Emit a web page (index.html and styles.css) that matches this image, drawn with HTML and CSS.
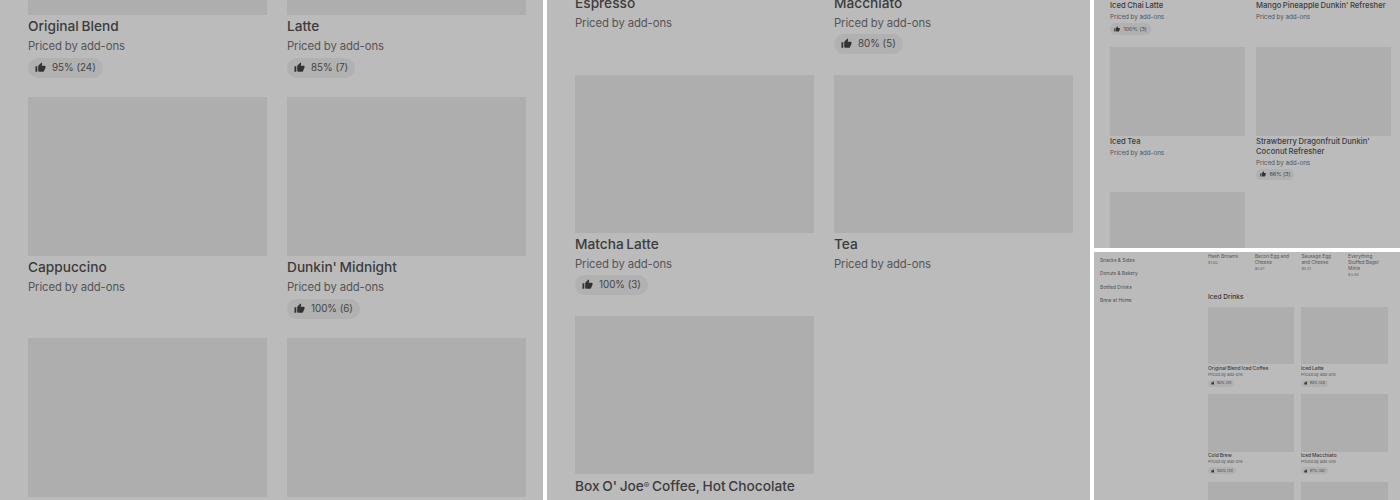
FILE: index.html
```html
<!DOCTYPE html>
<html lang="en">
<head>
    <meta charset="UTF-8">
    <title>Menu screenshots</title>
    <link rel="stylesheet" href="styles.css">
</head>
<body>
    <svg class="icon-defs" width="0" height="0">
        <symbol id="thumb" viewBox="0 0 24 24">
            <path d="M1 21h4V9H1v12zm22-11c0-1.1-.9-2-2-2h-6.31l.95-4.57.03-.32c0-.41-.17-.79-.44-1.06L14.17 1 7.59 7.59C7.22 7.95 7 8.45 7 9v10c0 1.1.9 2 2 2h9c.83 0 1.54-.5 1.84-1.22l3.02-7.05c.09-.23.14-.47.14-.73v-2z"/>
        </symbol>
    </svg>

    <div class="collage">
        <!-- Left panel -->
        <section class="panel panel-left">
            <div class="item-grid">
                <div class="card">
                    <div class="photo"></div>
                    <div class="title">Original Blend</div>
                    <div class="price">Priced by add-ons</div>
                    <div class="pill"><svg><use href="#thumb"/></svg>95% (24)</div>
                </div>
                <div class="card">
                    <div class="photo"></div>
                    <div class="title">Latte</div>
                    <div class="price">Priced by add-ons</div>
                    <div class="pill"><svg><use href="#thumb"/></svg>85% (7)</div>
                </div>
                <div class="card">
                    <div class="photo"></div>
                    <div class="title">Cappuccino</div>
                    <div class="price">Priced by add-ons</div>
                </div>
                <div class="card">
                    <div class="photo"></div>
                    <div class="title">Dunkin' Midnight</div>
                    <div class="price">Priced by add-ons</div>
                    <div class="pill"><svg><use href="#thumb"/></svg>100% (6)</div>
                </div>
                <div class="card"><div class="photo"></div></div>
                <div class="card"><div class="photo"></div></div>
            </div>
        </section>

        <!-- Middle panel -->
        <section class="panel panel-mid">
            <div class="item-grid">
                <div class="card">
                    <div class="photo"></div>
                    <div class="title">Espresso</div>
                    <div class="price">Priced by add-ons</div>
                </div>
                <div class="card">
                    <div class="photo"></div>
                    <div class="title">Macchiato</div>
                    <div class="price">Priced by add-ons</div>
                    <div class="pill"><svg><use href="#thumb"/></svg>80% (5)</div>
                </div>
                <div class="card">
                    <div class="photo"></div>
                    <div class="title">Matcha Latte</div>
                    <div class="price">Priced by add-ons</div>
                    <div class="pill"><svg><use href="#thumb"/></svg>100% (3)</div>
                </div>
                <div class="card">
                    <div class="photo"></div>
                    <div class="title">Tea</div>
                    <div class="price">Priced by add-ons</div>
                </div>
                <div class="card">
                    <div class="photo"></div>
                    <div class="title">Box O' Joe<span class="reg">®</span> Coffee, Hot Chocolate</div>
                    <div class="price">Priced by add-ons</div>
                </div>
            </div>
        </section>

        <!-- Top right panel -->
        <section class="panel panel-top">
            <div class="item-grid">
                <div class="card">
                    <div class="photo"></div>
                    <div class="title">Iced Chai Latte</div>
                    <div class="price">Priced by add-ons</div>
                    <div class="pill"><svg><use href="#thumb"/></svg>100% (3)</div>
                </div>
                <div class="card">
                    <div class="photo"></div>
                    <div class="title">Mango Pineapple Dunkin' Refresher</div>
                    <div class="price">Priced by add-ons</div>
                </div>
                <div class="card">
                    <div class="photo"></div>
                    <div class="title">Iced Tea</div>
                    <div class="price">Priced by add-ons</div>
                </div>
                <div class="card">
                    <div class="photo"></div>
                    <div class="title">Strawberry Dragonfruit Dunkin' Coconut Refresher</div>
                    <div class="price">Priced by add-ons</div>
                    <div class="pill"><svg><use href="#thumb"/></svg>66% (3)</div>
                </div>
                <div class="card"><div class="photo"></div></div>
            </div>
        </section>

        <!-- Bottom right panel -->
        <section class="panel panel-bottom">
            <nav class="side-nav">
                <div>Snacks &amp; Sides</div>
                <div>Donuts &amp; Bakery</div>
                <div>Bottled Drinks</div>
                <div>Brew at Home</div>
            </nav>
            <div class="menu">
                <div class="snack-row">
                    <div class="snack">
                        <div class="snack-name">Hash Browns</div>
                        <div class="snack-price">$1.60</div>
                    </div>
                    <div class="snack">
                        <div class="snack-name">Bacon Egg and Cheese</div>
                        <div class="snack-price">$5.81</div>
                    </div>
                    <div class="snack">
                        <div class="snack-name">Sausage Egg and Cheese</div>
                        <div class="snack-price">$5.41</div>
                    </div>
                    <div class="snack">
                        <div class="snack-name">Everything Stuffed Bagel Minis</div>
                        <div class="snack-price">$3.49</div>
                    </div>
                </div>
                <h2 class="section-title">Iced Drinks</h2>
                <div class="item-grid">
                    <div class="card">
                        <div class="photo"></div>
                        <div class="title">Original Blend Iced Coffee</div>
                        <div class="price">Priced by add-ons</div>
                        <div class="pill"><svg><use href="#thumb"/></svg>90% (31)</div>
                    </div>
                    <div class="card">
                        <div class="photo"></div>
                        <div class="title">Iced Latte</div>
                        <div class="price">Priced by add-ons</div>
                        <div class="pill"><svg><use href="#thumb"/></svg>90% (33)</div>
                    </div>
                    <div class="card">
                        <div class="photo"></div>
                        <div class="title">Cold Brew</div>
                        <div class="price">Priced by add-ons</div>
                        <div class="pill"><svg><use href="#thumb"/></svg>100% (12)</div>
                    </div>
                    <div class="card">
                        <div class="photo"></div>
                        <div class="title">Iced Macchiato</div>
                        <div class="price">Priced by add-ons</div>
                        <div class="pill"><svg><use href="#thumb"/></svg>97% (30)</div>
                    </div>
                    <div class="card"><div class="photo"></div></div>
                    <div class="card"><div class="photo"></div></div>
                </div>
            </div>
        </section>
    </div>
</body>
</html>
```

FILE: styles.css
```css
* { margin: 0; padding: 0; box-sizing: border-box; }
body { font-family: Inter, Roboto, sans-serif; background: white; color: #333; }

.icon-defs { display: block; height: 0; }

.collage {
    display: grid;
    grid-template-columns: 543px 543px 306px;
    grid-template-rows: 248px 248px;
    gap: 4px;
    height: 500px;
}

.panel { background: #bbb; overflow: hidden; --s: 1; }

.panel-left { grid-row: 1 / 3; padding-left: 28px; }
.panel-left .item-grid { margin-top: -144.5px; }
.panel-left .title { margin-top: 1px; }
.panel-left .price { margin-top: 1px; }

.panel-mid { grid-row: 1 / 3; padding-left: 28px; }
.panel-mid .item-grid { margin-top: -166px; row-gap: 21.3px; }
.panel-mid .photo { height: 158.2px; }
.panel-mid .title { margin-top: 1px; }
.panel-mid .price { margin-top: 1px; }
.panel-mid .pill { margin-top: 1.5px; }

.panel-top { --s: 0.56; padding-left: 16px; }
.panel-top .item-grid { margin-top: -89px; grid-template-columns: 135px 135px; column-gap: 11px; row-gap: 12px; }
.panel-top .title { margin-top: 1px; line-height: 10px; }
.panel-top .price { margin-top: 1px; line-height: 10px; }
.panel-top .pill { margin-top: 1px; height: 11.5px; }

.panel-bottom { --s: 0.36; display: flex; }

/* cards */
.item-grid {
    display: grid;
    grid-template-columns: 239px 239px;
    column-gap: 20px;
    row-gap: 19px;
    align-items: start;
}

.photo { height: calc(159px * var(--s)); background: #aeaeae; }

.title {
    font-size: calc(13.7px * var(--s));
    line-height: calc(20px * var(--s));
    font-weight: 500;
    word-spacing: calc(-1px * var(--s));
    margin-top: calc(2px * var(--s));
    color: #3c3c3c;
}

.reg { font-size: 0.6em; vertical-align: 0.4em; }

.price {
    font-size: calc(11.3px * var(--s));
    line-height: calc(18px * var(--s));
    letter-spacing: calc(-0.1px * var(--s));
    color: #555;
}

.pill {
    display: flex;
    align-items: center;
    gap: calc(6px * var(--s));
    width: fit-content;
    height: calc(20px * var(--s));
    margin-top: calc(3px * var(--s));
    padding: 0 calc(7px * var(--s));
    border-radius: calc(10px * var(--s));
    background: #b1b1b1;
    font-size: calc(9.8px * var(--s));
    color: #444;
}

.pill svg {
    width: calc(11px * var(--s));
    height: calc(11px * var(--s));
    fill: #333;
}

/* small menu page */
.side-nav { width: 114px; padding: 1.9px 0 0 6px; font-size: 4.8px; color: #4d4d4d; }
.side-nav div { height: 13.4px; line-height: 13.4px; }

.menu { width: 186px; }

.snack-row { display: flex; gap: 9.7px; height: 32px; padding-top: 0.6px; }
.snack { width: 37px; }
.snack-name { font-size: 4.8px; line-height: 6.2px; color: #555; }
.snack-price { font-size: 3.8px; line-height: 7px; color: #666; }

.section-title { font-size: 6.6px; line-height: 10px; font-weight: 500; margin: 8px 0 5px; }

.panel-bottom .item-grid {
    grid-template-columns: 86px 87px;
    column-gap: 7px;
    row-gap: 7.4px;
}
```
